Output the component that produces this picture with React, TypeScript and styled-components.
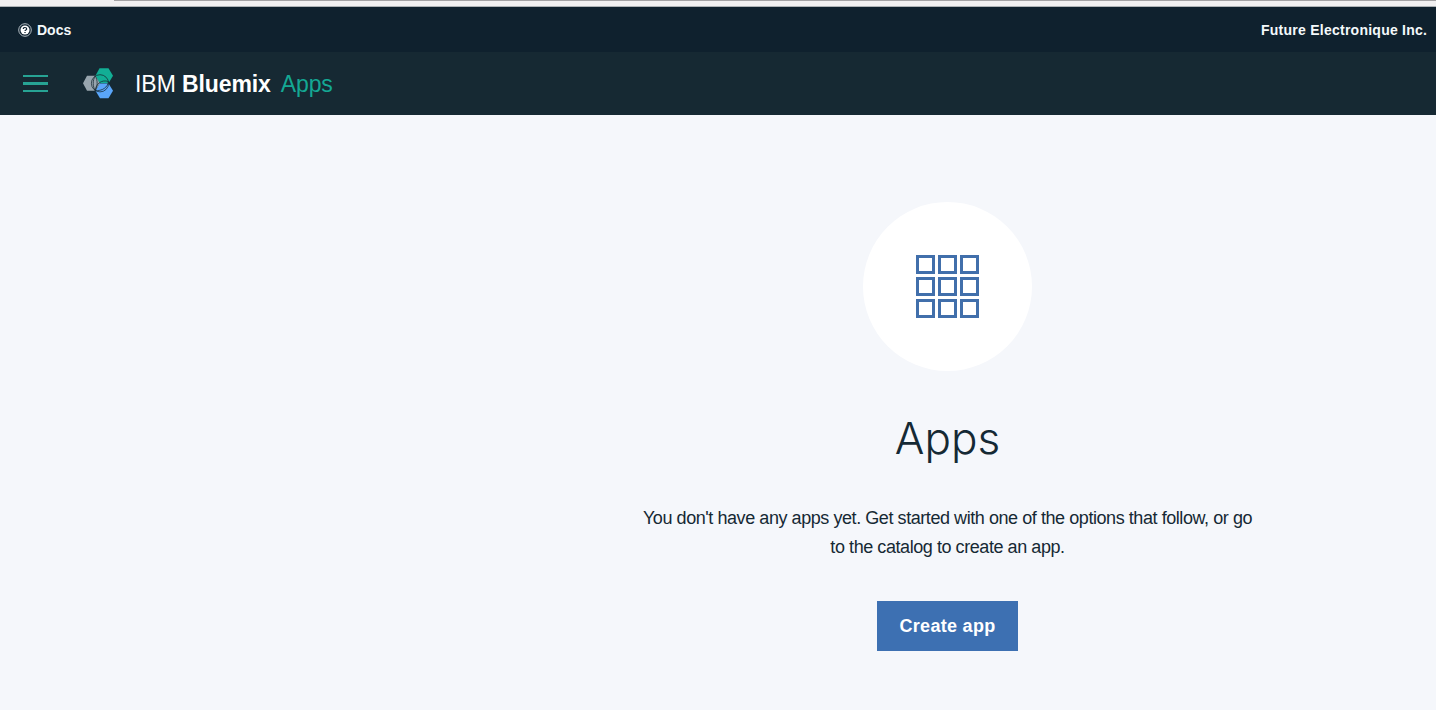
import React from "react";
import styled, { createGlobalStyle } from "styled-components";

const GlobalStyle = createGlobalStyle`
  *, *::before, *::after { box-sizing: border-box; }
  html, body { margin: 0; padding: 0; }
  body {
    background: #f5f7fb;
    color: #152934;
    font-family: "Liberation Sans", Arial, sans-serif;
    overflow: hidden;
  }
`;

const Page = styled.div`
  display: flex;
  flex-direction: column;
  height: 710px;
  overflow: hidden;
`;

const BrowserEdge = styled.div`
  height: 7px;
  padding-left: 114px;
  background: #f1f0f1;
  border-bottom: 1px solid #aeb3b6;
`;

const TabLine = styled.div`
  height: 1px;
  background: #a3a2a4;
`;

const AccountBar = styled.div`
  display: flex;
  align-items: center;
  justify-content: space-between;
  height: 45px;
  padding: 1px 9px 0 18px;
  background: #0f212e;
  color: #f4f9fb;
  font-weight: 700;
  font-size: 14px;
`;

const DocsLink = styled.a`
  display: flex;
  align-items: center;
  gap: 5px;
`;

const AccountName = styled.span`
  letter-spacing: 0.25px;
  margin-right: -0.25px;
`;

const NavBar = styled.header`
  display: flex;
  align-items: center;
  height: 63px;
  padding-left: 23px;
  background: #162933;
`;

const MenuButton = styled.div`
  display: flex;
  flex-direction: column;
  gap: 5px;
  width: 25px;
  margin-right: 34px;
`;

const MenuLine = styled.span<{ $thick?: boolean }>`
  height: ${(p) => (p.$thick ? 3 : 2)}px;
  background: #27a394;
`;

const Brand = styled.div`
  display: flex;
  align-items: baseline;
  margin-left: 21px;
  padding-top: 1px;
  color: #fff;
  font-size: 23px;
  line-height: 28px;
  white-space: pre;
`;

const BrandLight = styled.span`
  letter-spacing: -0.05px;
`;

const BrandStrong = styled.strong`
  letter-spacing: -0.12px;
`;

const BrandSection = styled.span`
  margin-left: 10px;
  color: #14a894;
  letter-spacing: -0.1px;
`;

const Main = styled.main`
  display: flex;
  flex: 1;
  flex-direction: column;
  align-items: center;
  padding: 87px 0 0 459px;
`;

const IconDisc = styled.div`
  display: grid;
  place-content: center;
  grid-template-columns: repeat(3, 19px);
  grid-auto-rows: 19px;
  gap: 3px;
  width: 169px;
  height: 169px;
  border-radius: 50%;
  background: #fff;
`;

const Tile = styled.span`
  border: 3px solid #416fab;
`;

const Title = styled.h1`
  margin: 39px 0 0;
  font-family: Inter, "Liberation Sans", sans-serif;
  font-size: 44px;
  font-weight: 300;
  line-height: 56px;
`;

const Message = styled.p`
  margin: 38px 0 0;
  font-size: 18px;
  line-height: 29px;
  letter-spacing: -0.435px;
  text-align: center;
  white-space: nowrap;
`;

const CreateButton = styled.button`
  width: 141px;
  height: 50px;
  margin-top: 39px;
  padding: 0;
  border: 0;
  background: #3d70b2;
  color: #fff;
  font: 700 18px "Liberation Sans", Arial, sans-serif;
  letter-spacing: 0.3px;
`;

const HelpIcon = () => (
  <svg width="14" height="14" viewBox="0 0 14 14">
    <circle cx="7" cy="7" r="6.3" fill="none" stroke="#c3ccd1" strokeWidth="0.9" />
    <circle cx="7" cy="7" r="4.5" fill="#fff" />
    <path d="M5.3 5.9C5.3 4 8.7 4 8.7 5.9C8.7 7 7 6.8 7 8.1" fill="none" stroke="#0f212e" strokeWidth="1.2" />
    <path d="M7 8.9V10.1" stroke="#0f212e" strokeWidth="1.3" />
  </svg>
);

const Logo = () => (
  <svg width="32" height="32" viewBox="0 0.7 32 32">
    <path d="M17.5 1H26.5L31 8.4L26.5 16H17.5L13.5 8.4Z" fill="#12ae95" />
    <path d="M17.5 16.2H26.5L31 23.4L26.5 31H18L13.5 23.4Z" fill="#5aa6fa" />
    <path d="M5 8.4H13.5L17.8 16L13.5 23.5H5L1 16Z" fill="#98a5ae" />
    <g fill="none" stroke="#162933" strokeWidth="0.75">
      <circle cx="18" cy="16" r="8.6" />
      <path d="M13.2 8.8C10.6 12.5 10.6 19.5 13.2 23.2" />
      <path d="M13.2 8.8C15.8 12.5 15.8 19.5 13.2 23.2" />
      <path d="M13.2 23.2C14 16.5 19.5 12 26.4 14.2" />
      <path d="M13.2 23.2C20 24 26 20 26.4 14.2" />
    </g>
  </svg>
);

export default function App() {
  return (
    <Page>
      <GlobalStyle />
      <BrowserEdge>
        <TabLine />
      </BrowserEdge>
      <AccountBar>
        <DocsLink>
          <HelpIcon />
          Docs
        </DocsLink>
        <AccountName>Future Electronique Inc.</AccountName>
      </AccountBar>
      <NavBar>
        <MenuButton>
          <MenuLine />
          <MenuLine $thick />
          <MenuLine />
        </MenuButton>
        <Logo />
        <Brand>
          <BrandLight>IBM </BrandLight>
          <BrandStrong>Bluemix</BrandStrong>
          <BrandSection>Apps</BrandSection>
        </Brand>
      </NavBar>
      <Main>
        <IconDisc>
          {Array.from({ length: 9 }, (_, i) => (
            <Tile key={i} />
          ))}
        </IconDisc>
        <Title>Apps</Title>
        <Message>
          You don't have any apps yet. Get started with one of the options that follow, or go
          <br />
          to the catalog to create an app.
        </Message>
        <CreateButton>Create app</CreateButton>
      </Main>
    </Page>
  );
}
